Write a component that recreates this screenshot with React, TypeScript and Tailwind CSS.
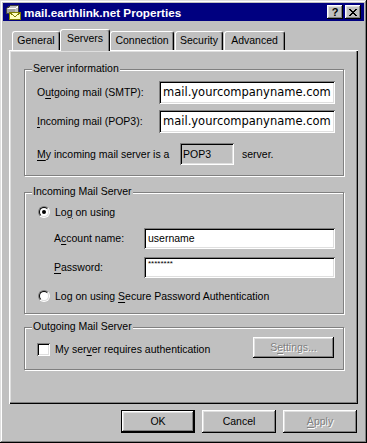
import React from 'react';

const raised = "shadow-[inset_-1px_-1px_0_#000,inset_1px_1px_0_#fff,inset_-2px_-2px_0_#808080,inset_2px_2px_0_#dfdfdf]";
const sunken = "shadow-[inset_1px_1px_0_#808080,inset_-1px_-1px_0_#fff,inset_2px_2px_0_#000,inset_-2px_-2px_0_#dfdfdf]";

function U({ children }: { children: React.ReactNode }) {
  return <span className="underline underline-offset-[2px] decoration-[1px]">{children}</span>;
}

function Group({ title, className, children }: { title: string; className: string; children?: React.ReactNode }) {
  return (
    <div className={`relative w-[320px] border border-[#808080] shadow-[1px_1px_0_#fff,inset_1px_1px_0_#fff] ${className}`}>
      <span className="absolute left-[7px] -top-[8px] bg-[#c0c0c0] px-[1px] leading-[13px]">{title}</span>
      {children}
    </div>
  );
}

function Radio({ checked }: { checked?: boolean }) {
  return (
    <div className="w-[12px] h-[12px] shrink-0 rounded-full border border-t-[#808080] border-l-[#808080] border-b-white border-r-white">
      <div className="w-full h-full rounded-full border border-t-black border-l-black border-b-[#dfdfdf] border-r-[#dfdfdf] bg-white flex items-center justify-center">
        {checked && <div className="w-[4px] h-[4px] rounded-full bg-black" />}
      </div>
    </div>
  );
}

function Tab({ label, selected, className }: { label: string; selected?: boolean; className: string }) {
  return (
    <div
      className={`flex justify-center bg-[#c0c0c0] border-t border-l border-white border-r border-r-black rounded-t-[3px] shadow-[inset_-1px_0_0_#808080] ${
        selected ? 'relative z-10 self-start h-[22px] pt-[2px]' : 'h-[19px] pt-[2px]'
      } ${className}`}
    >
      {label}
    </div>
  );
}

function MailIcon() {
  return (
    <svg width="16" height="16" viewBox="0 0 16 16" shapeRendering="crispEdges">
      <path d="M1.5 4.5 L5.5 1.5 L13.5 1.5 L13.5 7.5 L10.5 9.5 L1.5 9.5 Z" fill="#c0c0c0" stroke="#404040" />
      <path d="M2.5 4.5 L10.5 4.5 L13 2.5" fill="none" stroke="#fff" />
      <rect x="2" y="5" width="8" height="4" fill="#a0a0a0" />
      <rect x="4.5" y="8.5" width="11" height="7" fill="#ffffc0" stroke="#808000" />
      <path d="M4.5 8.5 L10 12.5 L15.5 8.5" fill="none" stroke="#808000" />
    </svg>
  );
}

export default function App() {
  return (
    <div className="w-[367px] h-[443px] bg-[#c0c0c0] p-[3px] flex flex-col text-[10.5px] leading-[13px] text-black font-['Liberation_Sans',Arial,sans-serif] shadow-[inset_-1px_-1px_0_#000,inset_1px_1px_0_#dfdfdf,inset_-2px_-2px_0_#808080,inset_2px_2px_0_#fff]">
      {/* title bar */}
      <div className="h-[18px] bg-[#000080] flex items-center pl-[2px] pr-[3px]">
        <MailIcon />
        <span className="ml-[3px] text-white font-bold text-[11.7px]">mail.earthlink.net Properties</span>
        <div className={`ml-auto w-[16px] h-[14px] bg-[#c0c0c0] flex items-center justify-center font-bold text-[11px] ${raised}`}>?</div>
        <div className={`ml-[2px] w-[16px] h-[14px] bg-[#c0c0c0] flex items-center justify-center ${raised}`}>
          <svg width="8" height="7" viewBox="0 0 8 7" shapeRendering="crispEdges">
            <path d="M0 0h2v1h1v1h2v-1h1v-1h2v1h-1v1h-1v1h-1v1h1v1h1v1h1v1h-2v-1h-1v-1h-2v1h-1v1h-2v-1h1v-1h1v-1h1v-1h-1v-1h-1v-1h-1z" fill="#000" />
          </svg>
        </div>
      </div>

      {/* tabs */}
      <div className="mt-[8px] ml-[6px] h-[21px] flex items-end">
        <Tab label="General" className="ml-[3px] w-[48px]" />
        <Tab label="Servers" selected className="w-[50px]" />
        <Tab label="Connection" className="w-[64px]" />
        <Tab label="Security" className="ml-[1px] w-[48px]" />
        <Tab label="Advanced" className="ml-[1px] w-[61px]" />
      </div>

      {/* panel */}
      <div className="ml-[6px] w-[349px] h-[354px] pt-[19px] pl-[15px] flex flex-col shadow-[inset_1px_1px_0_#fff,inset_-1px_-1px_0_#000,inset_-2px_-2px_0_#808080,inset_2px_2px_0_#dfdfdf]">
        <Group title="Server information" className="h-[107px] pt-[11px] pl-[12px] flex flex-col">
          <div className="h-[23px] flex items-center">
            <span className="w-[122px]">O<U>u</U>tgoing mail (SMTP):</span>
            <div className={`w-[176px] h-[23px] bg-white flex items-center pl-[4px] text-[11.5px] font-['DejaVu_Sans',sans-serif] ${sunken}`}>mail.yourcompanyname.com</div>
          </div>
          <div className="mt-[6px] h-[23px] flex items-center">
            <span className="w-[122px]"><U>I</U>ncoming mail (POP3):</span>
            <div className={`w-[176px] h-[23px] bg-white flex items-center pl-[4px] text-[11.5px] font-['DejaVu_Sans',sans-serif] ${sunken}`}>mail.yourcompanyname.com</div>
          </div>
          <div className="mt-[10px] h-[22px] flex items-center">
            <span className="w-[143px]"><U>M</U>y incoming mail server is a</span>
            <div className={`w-[54px] h-[22px] flex items-center pl-[3px] ${sunken}`}>POP3</div>
            <span className="ml-[8px]">server.</span>
          </div>
        </Group>

        <Group title="Incoming Mail Server" className="mt-[16px] h-[122px] pl-[13px] flex flex-col">
          <div className="mt-[13px] h-[12px] flex items-center">
            <Radio checked />
            <span className="ml-[5px]">Lo<U>g</U> on using</span>
          </div>
          <div className="mt-[10px] h-[21px] pl-[16px] flex items-center">
            <span className="w-[90px]">A<U>c</U>count name:</span>
            <div className={`w-[191px] h-[21px] bg-white flex items-center pl-[4px] ${sunken}`}>username</div>
          </div>
          <div className="mt-[8px] h-[21px] pl-[16px] flex items-center">
            <span className="w-[90px]"><U>P</U>assword:</span>
            <div className={`w-[191px] h-[21px] bg-white flex items-start pt-[2px] pl-[4px] text-[8px] leading-[10px] ${sunken}`}>********</div>
          </div>
          <div className="mt-[12px] h-[12px] flex items-center">
            <Radio />
            <span className="ml-[5px]">Log on using <U>S</U>ecure Password Authentication</span>
          </div>
        </Group>

        <Group title="Outgoing Mail Server" className="mt-[13px] h-[43px] pl-[12px] flex items-start">
          <div className={`mt-[15px] w-[13px] h-[13px] bg-white shrink-0 ${sunken}`} />
          <span className="mt-[15px] ml-[5px]">My ser<U>v</U>er requires authentication</span>
          <div className={`ml-auto mr-[9px] mt-[9px] w-[81px] h-[21px] flex items-center justify-center text-[#808080] [text-shadow:1px_1px_0_#fff] ${raised}`}>
            S<U>e</U>ttings...
          </div>
        </Group>
      </div>

      {/* dialog buttons */}
      <div className="mt-[6px] h-[23px] flex justify-end mr-[7px]">
        <div className={`w-[74px] h-[23px] border border-black flex items-center justify-center ${raised}`}>OK</div>
        <div className={`ml-[7px] w-[74px] h-[23px] flex items-center justify-center ${raised}`}>Cancel</div>
        <div className={`ml-[7px] w-[74px] h-[23px] flex items-center justify-center text-[#808080] [text-shadow:1px_1px_0_#fff] ${raised}`}>
          <U>A</U>pply
        </div>
      </div>
    </div>
  );
}
